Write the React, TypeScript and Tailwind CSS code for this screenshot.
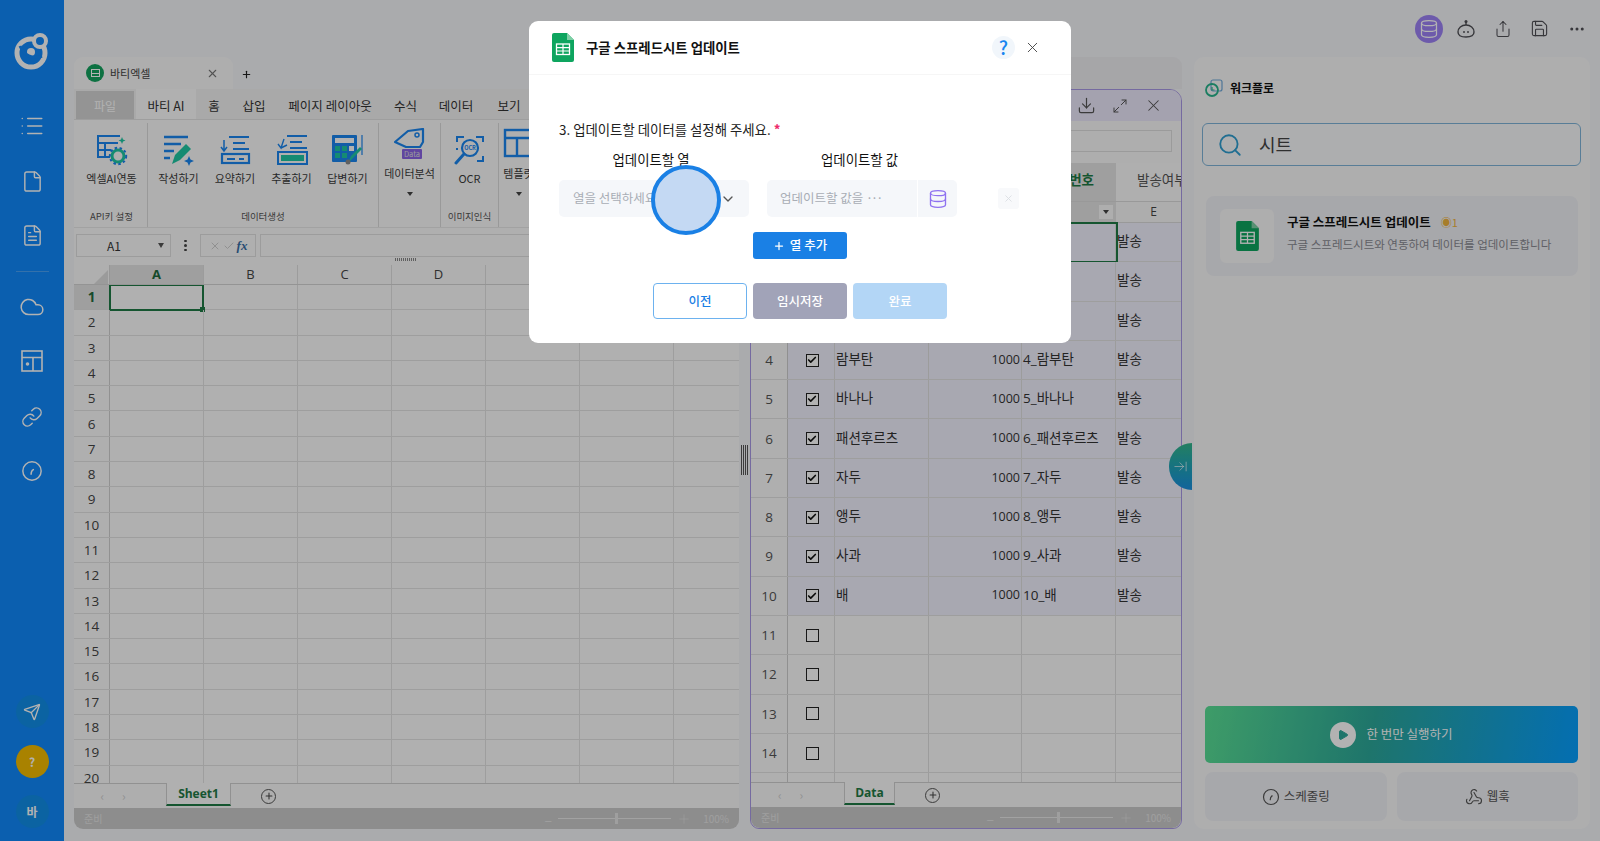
import { ArrowRightToLine, Check, ChevronDown, Cloud, Database, Download, Ellipsis, File, FileText, Link, List, Maximize2, Play, Plus, Save, Search, Send, Share, Webhook, X } from 'lucide-react';

const blue = '#1a86f0';
const teal = '#1fc8a4';

function SheetIcon({ className }: { className: string }) {
    return (
        <svg viewBox="0 0 22 29" className={className}>
            <path d="M2 0h13l7 7v20a2 2 0 0 1-2 2H2a2 2 0 0 1-2-2V2a2 2 0 0 1 2-2z" fill="#0ea55f" />
            <path d="M15 0l7 7h-7z" fill="#7fd0a6" />
            <rect x="4.5" y="11" width="13" height="10.5" fill="none" stroke="#fff" strokeWidth="1.3" />
            <path d="M4.5 14.6h13M4.5 18h13M11 11v10.5" stroke="#fff" strokeWidth="1.2" />
        </svg>
    );
}

function GaugeIcon({ size, color }: { size: number; color: string }) {
    return (
        <svg width={size} height={size} viewBox="0 0 24 24" fill="none" stroke={color} strokeWidth="1.6" strokeLinecap="round">
            <circle cx="12" cy="12" r="10" />
            <path d="M11 15.5c0-2 .5-4 2.5-5" />
        </svg>
    );
}

function LayoutIcon() {
    return (
        <svg width="22" height="22" viewBox="0 0 22 22" fill="none" stroke="white" strokeWidth="1.6">
            <rect x="1" y="1" width="20" height="20" />
            <path d="M1 7.5h20M12 7.5V21" />
            <circle cx="6.5" cy="14" r="1" fill="white" />
        </svg>
    );
}

function RibbonIcon({ name }: { name: string }) {
    if (name === 'excel') {
        return (
            <svg width="32" height="32" viewBox="0 0 32 32" fill="none">
                <path d="M24 2H2v21h12" stroke={blue} strokeWidth="2" />
                <path d="M2 9h20M2 16h13M9 9v14" stroke={blue} strokeWidth="2" />
                <path d="M26 3l1 2.5 2.5 1-2.5 1-1 2.5-1-2.5-2.500-1 2.500-1z" fill={teal} />
                <circle cx="22" cy="22" r="6" stroke={teal} strokeWidth="3" />
                <circle cx="22" cy="22" r="8.200" stroke={blue} strokeWidth="2" strokeDasharray="2.500 2.500" />
            </svg>
        );
    }
    if (name === 'write') {
        return (
            <svg width="32" height="32" viewBox="0 0 32 32" fill="none">
                <path d="M1 3h24M1 10h17M1 17h10M1 24h6" stroke={blue} strokeWidth="2.400" />
                <path d="M9 30l3-9 11-11 5 5-11 11z" fill={teal} />
                <path d="M26 22l1.500 3.500 3.500 1.500-3.500 1.500-1.500 3.500-1.500-3.500-3.500-1.500 3.500-1.500z" fill={blue} />
            </svg>
        );
    }
    if (name === 'summary') {
        return (
            <svg width="32" height="32" viewBox="0 0 32 32" fill="none">
                <path d="M10 3h20M14 9h12M14 15h16" stroke={blue} strokeWidth="2.200" />
                <path d="M5 6v11M2 13l3 4 3-4" stroke={blue} strokeWidth="1.500" />
                <rect x="3" y="20" width="27" height="9" stroke={blue} strokeWidth="2.200" />
                <path d="M8 25h8M20 25h5" stroke={blue} strokeWidth="2" />
            </svg>
        );
    }
    if (name === 'extract') {
        return (
            <svg width="32" height="32" viewBox="0 0 32 32" fill="none">
                <path d="M11 2h20M14 8h12M14 14h17" stroke={blue} strokeWidth="2.200" />
                <path d="M8 5L5 14 2 10M5 14l6-3" stroke={blue} strokeWidth="1.400" />
                <rect x="2" y="18" width="29" height="12" stroke={blue} strokeWidth="2" />
                <rect x="5" y="21" width="23" height="6" fill={teal} />
            </svg>
        );
    }
    if (name === 'answer') {
        return (
            <svg width="34" height="32" viewBox="0 0 34 32" fill="none">
                <rect x="1" y="1" width="25" height="27" rx="1" fill={blue} />
                <rect x="4" y="4" width="19" height="5" fill="#fff" />
                <path d="M4 12h5v5H4zM11 12h5v5h-5zM4 19h5v5H4zM11 19h5v5h-5z" fill={teal} />
                <path d="M18 12h5v5h-5z" fill="#fff" />
                <path d="M31 1v20" stroke={blue} strokeWidth="1.200" />
                <path d="M17 29l3-7 9-9 2 2-9 9z" fill={teal} />
                <circle cx="17" cy="28" r="2.500" fill="#8a8a8a" />
            </svg>
        );
    }
    if (name === 'tag') {
        return (
            <svg width="32" height="32" viewBox="0 0 32 32" fill="none">
                <path d="M1 14L14 3l15-2v13L26 19H12z" stroke={blue} strokeWidth="2.200" strokeLinejoin="round" />
                <circle cx="23" cy="7" r="2" stroke={blue} strokeWidth="1.500" />
                <rect x="8" y="21" width="20" height="10" rx="1" fill="#8a64e6" />
                <text x="18" y="29" textAnchor="middle" fontSize="7.500" fill="#ddd">Data</text>
            </svg>
        );
    }
    if (name === 'ocr') {
        return (
            <svg width="32" height="32" viewBox="0 0 32 32" fill="none">
                <path d="M3 8V3h7M29 8V3h-7M29 22v5h-6M3 16v-2" stroke={blue} strokeWidth="2" />
                <circle cx="16" cy="14" r="8" stroke={blue} strokeWidth="2.200" />
                <path d="M10 20l-8 9" stroke={blue} strokeWidth="3" strokeLinecap="round" />
                <text x="16" y="16" textAnchor="middle" fontSize="5.500" fontWeight="700" fill={blue}>OCR</text>
            </svg>
        );
    }
    return (
        <svg width="32" height="32" viewBox="0 0 32 32" fill="none">
            <rect x="2" y="2" width="28" height="26" stroke={blue} strokeWidth="2.400" />
            <path d="M2 10h28M14 10v18" stroke={blue} strokeWidth="2.400" />
        </svg>
    );
}

function RibbonItem({ name, label, width, caret }: { name: string; label: string; width: string; caret?: boolean }) {
    return (
        <div className={`${width} shrink-0 flex flex-col items-center`}>
            <div className={caret ? 'h-[42px] flex items-center' : 'h-[43px] flex items-end'}>
                <RibbonIcon name={name} />
            </div>
            <div className={`${caret ? 'mt-0' : 'mt-[4px]'} text-[11px] text-[#3a3a3a] whitespace-nowrap`}>{label}</div>
            {caret && <div className="mt-[10px] w-0 h-0 border-x-[3px] border-x-transparent border-t-[4px] border-t-[#444]" />}
        </div>
    );
}

function RibbonGroup({ label, width, children }: { label: string; width: string; children: React.ReactNode }) {
    return (
        <div className={`${width} shrink-0 h-full flex flex-col border-r border-[#dcdcdc]`}>
            <div className="flex-1 flex justify-center">{children}</div>
            <div className="h-[18px] text-[9.5px] text-[#555] text-center">{label}</div>
        </div>
    );
}

function Ribbon() {
    const tabs: [string, string][] = [
        ['홈', 'w-[36px]'],
        ['삽입', 'w-[44px]'],
        ['페이지 레이아웃', 'w-[108px]'],
        ['수식', 'w-[43px]'],
        ['데이터', 'w-[58px]'],
        ['보기', 'w-[48px]'],
    ];
    return (
        <>
            <div className="h-[31px] shrink-0 bg-[#f3f3f3] flex items-end pl-[2px] border-b border-[#e3e3e3] font-['Noto_Sans_CJK_KR',sans-serif]">
                <div className="w-[58px] h-[28px] bg-[#d4d4d4] text-white text-[12px] flex items-center justify-center pt-[2px]">파일</div>
                <div className="ml-[2px] w-[60px] h-[30px] bg-[#fcfcfc] text-[12.500px] text-[#333] flex items-center justify-center pt-[4px]">바티 AI</div>
                {tabs.map(([t, w]) => (
                    <div key={t} className={`${w} h-[28px] shrink-0 text-[12.500px] text-[#333] flex items-center justify-center pt-[3px]`}>{t}</div>
                ))}
            </div>
            <div className="h-[108px] shrink-0 bg-[#fbfbfb] flex overflow-hidden pt-[3px] pl-[2px] border-b border-[#e8e8e8]">
                <RibbonGroup label="API키 설정" width="w-[72px]">
                    <RibbonItem name="excel" label="엑셀AI연동" width="w-[70px]" />
                </RibbonGroup>
                <RibbonGroup label="데이터생성" width="w-[231px]">
                    <RibbonItem name="write" label="작성하기" width="w-[56px]" />
                    <RibbonItem name="summary" label="요약하기" width="w-[57px]" />
                    <RibbonItem name="extract" label="추출하기" width="w-[56px]" />
                    <RibbonItem name="answer" label="답변하기" width="w-[56px]" />
                </RibbonGroup>
                <RibbonGroup label="" width="w-[62px]">
                    <RibbonItem name="tag" label="데이터분석" caret width="w-[60px]" />
                </RibbonGroup>
                <RibbonGroup label="이미지인식" width="w-[58px]">
                    <RibbonItem name="ocr" label="OCR" width="w-[56px]" />
                </RibbonGroup>
                <RibbonGroup label="" width="w-[40px]">
                    <RibbonItem name="template" label="템플릿" caret width="w-[38px]" />
                </RibbonGroup>
            </div>
        </>
    );
}

function FormulaBar() {
    return (
        <div className="h-[37px] shrink-0 bg-[#fbfbfb] flex items-start pt-[6px] pl-[2px] pr-[10px] gap-[4px]">
            <div className="w-[95px] h-[23px] border border-[#e0e0e0] flex items-center justify-between pl-[30px] pr-[6px] text-[12px] text-[#333]">
                A1
                <div className="w-0 h-0 border-x-[3.500px] border-x-transparent border-t-[5px] border-t-[#555]" />
            </div>
            <div className="w-[21px] h-[23px] flex flex-col items-center justify-center gap-[2px]">
                <div className="w-[2.500px] h-[2.500px] rounded-full bg-[#444]" />
                <div className="w-[2.500px] h-[2.500px] rounded-full bg-[#444]" />
                <div className="w-[2.500px] h-[2.500px] rounded-full bg-[#444]" />
            </div>
            <div className="w-[56px] h-[23px] border border-[#e0e0e0] flex items-center justify-center gap-[2px] text-[#cfcfcf]">
                <X size={12} />
                <Check size={12} />
                <span className="font-['Liberation_Serif',serif] italic text-[13px] text-[#3a6ea5] font-bold">fx</span>
            </div>
            <div className="flex-1 h-[23px] border border-[#e0e0e0] relative">
                <div className="absolute left-[134px] top-[23px] w-[22px] h-[3px] bg-[repeating-linear-gradient(90deg,#888_0,#888_1px,transparent_1px,transparent_2px)]" />
            </div>
        </div>
    );
}

function SheetBar({ name, tabW, plusGap, left }: { name: string; tabW: string; plusGap: string; left: string }) {
    return (
        <div className="h-[25px] shrink-0 bg-[#fafafa] border-t border-[#d0d0d0] flex items-start">
            <div className={`${left} h-full flex items-center justify-center gap-[18px] pr-[14px] text-[#cfcfcf] text-[12px]`}>
                <span>‹</span>
                <span>›</span>
            </div>
            <div className={`${tabW} h-[23px] -mt-px bg-[#fcfcfc] border-x border-[#d0d0d0] border-b-2 border-b-[#1f7a45] flex items-center justify-center text-[12px] font-bold text-[#1f7a45] font-['Open_Sans',sans-serif]`}>{name}</div>
            <div className={`${plusGap} h-full flex items-center`}>
                <div className="w-[15px] h-[15px] rounded-full border border-[#555] flex items-center justify-center">
                    <Plus size={10} color="#444" strokeWidth={2.500} />
                </div>
            </div>
        </div>
    );
}

function StatusBar({ sliderW }: { sliderW: string }) {
    return (
        <div className="h-[21px] shrink-0 bg-[#cbcbcb] rounded-b-[9px] flex items-center px-[10px] text-[10px] text-[#e4e4e4]">
            <span>준비</span>
            <div className="ml-auto flex items-center gap-[4px]">
                <span className="text-[14px] leading-none">–</span>
                <div className={`${sliderW} h-px bg-[#e8e8e8] relative mx-[2px]`}>
                    <div className="absolute left-1/2 -top-[5px] w-[3px] h-[11px] bg-[#e4e4e4]" />
                </div>
                <Plus size={14} strokeWidth={1} />
                <span className="ml-[8px]">100%</span>
            </div>
        </div>
    );
}

function LeftSheet() {
    const columns = ['A', 'B', 'C', 'D', '', '', ''];
    const rows = Array.from({ length: 20 }, (_, i) => i + 1);
    return (
        <div className="w-[665px] shrink-0 flex flex-col">
            <div className="h-[32px] shrink-0 flex items-center">
                <div className="w-[159px] h-full bg-[#fafafa] rounded-t-[9px] flex items-center pl-[12px] pr-[14px]">
                    <div className="w-[18px] h-[18px] rounded-full bg-[#14a35f] flex items-center justify-center">
                        <div className="w-[9px] h-[8px] border border-white bg-[linear-gradient(#fff,#fff)] bg-[length:100%_1px] bg-center bg-no-repeat" />
                    </div>
                    <span className="ml-[6px] text-[11px] text-[#444]">바티엑셀</span>
                    <X size={13} color="#777" className="ml-auto" />
                </div>
                <Plus size={11} color="#222" strokeWidth={2.500} className="ml-[8px] mt-[2px]" />
            </div>
            <Ribbon />
            <FormulaBar />
            <div className="flex-1 flex flex-col overflow-hidden bg-[#fdfdfd] font-['Open_Sans','Noto_Sans_CJK_KR',sans-serif]">
                <div className="h-[20px] shrink-0 flex border-b border-[#d4d4d4] bg-[#fbfbfb]">
                    <div className="w-[36px] shrink-0 border-r border-[#d8d8d8] flex justify-end items-end pr-[1px]">
                        <div className="w-0 h-0 border-l-[14px] border-l-transparent border-b-[14px] border-b-[#dedede]" />
                    </div>
                    {columns.map((c, i) => (
                        <div key={i} className={`w-[94px] shrink-0 border-r border-[#e0e0e0] flex items-center justify-center text-[13px] ${i === 0 ? 'bg-[#e4e4e4] font-bold text-[#1f6b3d]' : 'text-[#444]'}`}>{c}</div>
                    ))}
                </div>
                <div className="flex-1 overflow-hidden">
                    {rows.map(r => (
                        <div key={r} className="h-[25.300px] flex border-b border-[#e3e3e3] relative">
                            <div className={`w-[36px] shrink-0 border-r border-[#d0d0d0] flex items-center justify-center text-[13.500px] ${r === 1 ? 'bg-[#e4e4e4] font-bold text-[#1f6b3d]' : 'bg-[#fbfbfb] text-[#444]'}`}>{r}</div>
                            {columns.map((_, i) => (
                                <div key={i} className="w-[94px] shrink-0 border-r border-[#e3e3e3]" />
                            ))}
                            {r === 1 && (
                                <div className="absolute left-[35px] top-[-1px] w-[95px] h-[27px] border-2 border-[#1f7a45]">
                                    <div className="absolute -right-[3px] -bottom-[3px] w-[5px] h-[5px] bg-[#1f7a45]" />
                                </div>
                            )}
                        </div>
                    ))}
                </div>
            </div>
            <SheetBar name="Sheet1" tabW="w-[65px]" plusGap="ml-[30px]" left="w-[92px]" />
            <StatusBar sliderW="w-[113px]" />
        </div>
    );
}

const dataRows = [
    { no: 1, name: '', checked: true },
    { no: 2, name: '', checked: true },
    { no: 3, name: '', checked: true },
    { no: 4, name: '람부탄', checked: true },
    { no: 5, name: '바나나', checked: true },
    { no: 6, name: '패션후르츠', checked: true },
    { no: 7, name: '자두', checked: true },
    { no: 8, name: '앵두', checked: true },
    { no: 9, name: '사과', checked: true },
    { no: 10, name: '배', checked: true },
    { no: 11, name: '', checked: false },
    { no: 12, name: '', checked: false },
    { no: 13, name: '', checked: false },
    { no: 14, name: '', checked: false },
    { no: 15, name: '', checked: false },
];

function RightSheet() {
    return (
        <div className="w-[432px] shrink-0 flex flex-col relative">
            <div className="h-[32px] shrink-0 bg-[#eeeef1] rounded-t-[9px]" />
            <div className="flex-1 flex flex-col min-h-0 border border-[#a898e6] rounded-t-[12px] rounded-b-[9px]">
                <div className="h-[31px] shrink-0 bg-[#ebe8fb] rounded-t-[11px] flex items-center justify-end gap-[16px] pr-[18px] text-[#555]">
                    <Download size={19} strokeWidth={1.500} />
                    <Maximize2 size={16} strokeWidth={1.500} />
                    <X size={19} strokeWidth={1.300} />
                </div>
                <div className="h-[42px] shrink-0 bg-[#fafafa] flex items-start pt-[9px] justify-end pr-[9px]">
                    <div className="w-[300px] h-[22px] border border-[#dedede]" />
                </div>
                <div className="flex-1 min-h-0 flex flex-col overflow-hidden font-['Open_Sans','Noto_Sans_CJK_KR',sans-serif] text-[13.500px] text-[#333]">
                    <div className="h-[38px] shrink-0 flex bg-[#fbfbfb]">
                        <div className="w-[365px] shrink-0 bg-[#e4e4e4] flex items-center justify-end pr-[22px] pb-[4px] font-bold text-[#1f7a45]">번호</div>
                        <div className="flex-1 flex items-center pl-[21px] pb-[4px] text-[#555] whitespace-nowrap overflow-hidden">발송여부</div>
                    </div>
                    <div className="h-[22px] shrink-0 flex bg-[#f8f8f8] border-y border-[#dcdcdc]">
                        <div className="w-[365px] shrink-0 bg-[#e4e4e4] flex items-center justify-end pr-[3px]">
                            <div className="w-[14px] h-[14px] bg-[#fafafa] flex items-center justify-center">
                                <div className="w-0 h-0 border-x-[3.500px] border-x-transparent border-t-[4px] border-t-[#444]" />
                            </div>
                        </div>
                        <div className="flex-1 flex items-center justify-center pl-[10px] text-[12px] text-[#444]">E</div>
                    </div>
                    {dataRows.map(r => (
                        <div key={r.no} className="h-[39.300px] shrink-0 flex border-b border-[#e3e3e3] relative">
                            <div className="w-[37px] shrink-0 bg-[#fbfbfb] border-r border-[#cfcfcf] flex items-center justify-center text-[#555]">{r.no}</div>
                            <div className={`flex-1 flex ${r.no <= 10 ? 'bg-[#f1f1fe]' : 'bg-[#fdfdfd]'}`}>
                                <div className="w-[47px] shrink-0 border-r border-[#e0e0e0] pl-[2px] flex items-center justify-center">
                                    <div className="w-[13px] h-[13px] border border-[#222] flex items-center justify-center bg-white">
                                        {r.checked && <Check size={10} color="#111" strokeWidth={4} />}
                                    </div>
                                </div>
                                <div className="w-[94px] shrink-0 border-r border-[#e0e0e0] pl-[1px] pb-[2px] flex items-center">{r.name}</div>
                                <div className="w-[93px] shrink-0 border-r border-[#e0e0e0] pr-[1px] flex items-center justify-end text-[12.500px]">{r.name && '1000'}</div>
                                <div className="w-[94px] shrink-0 border-r border-[#e0e0e0] pl-[1px] pb-[2px] flex items-center whitespace-nowrap">{r.name && `${r.no}_${r.name}`}</div>
                                <div className="flex-1 pl-[1px] pb-[2px] flex items-center">{r.no <= 10 && '발송'}</div>
                            </div>
                            {r.no === 1 && <div className="absolute left-[181px] top-[-1px] w-[186px] h-[41px] border-2 border-[#1f7a45]" />}
                        </div>
                    ))}
                </div>
                <SheetBar name="Data" tabW="w-[51px]" plusGap="ml-[30px]" left="w-[93px]" />
                <StatusBar sliderW="w-[113px]" />
            </div>
            <div className="absolute right-[-10px] top-[386px] w-[23px] h-[47px] rounded-l-full bg-gradient-to-b from-[#34b68a] to-[#1d8fe0] flex items-center justify-center text-white">
                <ArrowRightToLine size={15} strokeWidth={1} />
            </div>
        </div>
    );
}

function WorkflowPanel() {
    return (
        <div className="flex-1 bg-[#fafafa] rounded-[10px] flex flex-col px-[9px] pt-[22px] pb-[8px] font-['Noto_Sans_CJK_KR',sans-serif]">
            <div className="flex items-center h-[18px] pl-[2px]">
                <svg width="18" height="18" viewBox="0 0 18 18" fill="none">
                    <rect x="6" y="1" width="11" height="11" rx="2" stroke="#6fa8d8" strokeWidth="1.200" />
                    <circle cx="7" cy="11" r="6" stroke="#28b48c" strokeWidth="1.800" />
                    <path d="M7 8v3h2.500" stroke="#28b48c" strokeWidth="1.200" />
                </svg>
                <span className="ml-[7px] text-[12px] font-bold text-[#111]">워크플로</span>
            </div>
            <div className="mt-[26px] -ml-px h-[43px] shrink-0 border border-[#7fb4d8] rounded-[6px] bg-[#f8f9fb] flex items-center pl-[14px]">
                <Search size={26} color="#2f9ed0" strokeWidth={1.700} />
                <span className="ml-[16px] text-[18px] text-[#444]">시트</span>
            </div>
            <div className="mt-[30px] mx-[3px] h-[80px] shrink-0 rounded-[8px] bg-[#f0f1f5] flex items-center pl-[14px]">
                <div className="w-[54px] h-[54px] bg-[#f9f9f9] rounded-[6px] flex items-center justify-center">
                    <SheetIcon className="w-[23px] h-[30px]" />
                </div>
                <div className="ml-[13px] pb-[6px]">
                    <div className="flex items-center">
                        <span className="text-[12.500px] font-bold text-[#111] leading-[18px]">구글 스프레드시트 업데이트</span>
                        <span className="ml-[10px] text-[11px] text-[#f0b43c]">◉1</span>
                    </div>
                    <div className="mt-[5px] text-[11.500px] text-[#8a8a92] whitespace-nowrap">구글 스프레드시트와 연동하여 데이터를 업데이트합니다</div>
                </div>
            </div>
            <div className="mt-auto ml-[2px] mr-[3px] flex flex-col gap-[9px]">
                <div className="h-[57px] rounded-[5px] bg-[linear-gradient(100deg,#5ae096,#2ca89a_45%,#069fff)] flex items-center justify-center gap-[10px] text-[12.500px] text-white">
                    <div className="w-[26px] h-[26px] rounded-full bg-white flex items-center justify-center">
                        <Play size={12} fill="#2ca89a" color="#2ca89a" />
                    </div>
                    한 번만 실행하기
                </div>
                <div className="flex gap-[10px] h-[49px]">
                    <div className="flex-1 bg-[#f0f1f5] rounded-[8px] flex items-center justify-center gap-[4px] text-[12.500px] text-[#555]">
                        <GaugeIcon size={18} color="#555" />
                        스케줄링
                    </div>
                    <div className="flex-1 bg-[#f0f1f5] rounded-[8px] flex items-center justify-center gap-[4px] text-[12.500px] text-[#555]">
                        <Webhook size={18} color="#555" strokeWidth={1.500} />
                        웹훅
                    </div>
                </div>
            </div>
        </div>
    );
}

function Sidebar() {
    return (
        <div className="w-[64px] shrink-0 bg-[#1088fb] flex flex-col items-center text-white">
            <div className="h-[98px] flex items-start pt-[32px]">
                <svg width="36" height="38" viewBox="0 0 36 38" fill="none">
                    <circle cx="17" cy="21" r="14" stroke="white" strokeWidth="5" />
                    <circle cx="17" cy="20" r="4" fill="white" />
                    <path d="M6 14c4 9 12 14 22 10" stroke="#1088fb" strokeWidth="3" />
                    <circle cx="26" cy="9" r="6" fill="#1088fb" stroke="white" strokeWidth="4" />
                </svg>
            </div>
            <div className="h-[55px] flex items-center"><List size={26} strokeWidth={1.400} /></div>
            <div className="h-[57px] flex items-center"><File size={23} strokeWidth={1.500} /></div>
            <div className="h-[51px] flex items-center"><FileText size={23} strokeWidth={1.500} /></div>
            <div className="my-[10px] w-[33px] h-px bg-[#4ba3f5]" />
            <div className="h-[50px] flex items-center"><Cloud size={26} strokeWidth={1.400} /></div>
            <div className="h-[58px] flex items-center"><LayoutIcon /></div>
            <div className="h-[54px] flex items-center"><Link size={22} strokeWidth={1.600} /></div>
            <div className="h-[54px] flex items-center"><GaugeIcon size={22} color="white" /></div>
            <div className="mt-auto flex flex-col items-center gap-[17px] pb-[13px]">
                <div className="w-[33px] h-[33px] rounded-full bg-[#108fe8] flex items-center justify-center"><Send size={18} strokeWidth={1.800} /></div>
                <div className="w-[33px] h-[33px] rounded-full bg-[#f2bb00] flex items-center justify-center text-[12px] font-bold">?</div>
                <div className="w-[33px] h-[33px] rounded-full bg-[#108fe8] flex items-center justify-center text-[12px] font-bold">바</div>
            </div>
        </div>
    );
}

function TopBar() {
    return (
        <div className="h-[57px] shrink-0 flex items-center justify-end text-[#4f4f55]">
            <div className="w-[37px] flex justify-center">
                <div className="w-[28px] h-[28px] rounded-full bg-[#9c82f5] flex items-center justify-center text-white">
                    <Database size={20} strokeWidth={1.500} />
                </div>
            </div>
            <div className="w-[37px] flex justify-center">
                <svg width="18" height="20" viewBox="0 0 18 20" fill="none" stroke="currentColor" strokeWidth="1.400">
                    <circle cx="9" cy="2.500" r="1.500" fill="currentColor" stroke="none" />
                    <path d="M9 3v3" />
                    <path d="M1 13c0-4 3.500-7 8-7s8 3 8 7-3.500 5-8 5-8-1-8-5z" />
                    <path d="M7 12v2M11 12v2" />
                </svg>
            </div>
            <div className="w-[37px] flex justify-center"><Share size={18} strokeWidth={1.400} /></div>
            <div className="w-[37px] flex justify-center"><Save size={19} strokeWidth={1.400} /></div>
            <div className="w-[37px] flex justify-center mr-[5px]"><Ellipsis size={18} /></div>
        </div>
    );
}

function UpdateModal() {
    return (
        <div className="absolute z-20 left-[529px] top-[21px] w-[542px] h-[322px] bg-white rounded-[9px] flex flex-col font-['Noto_Sans_CJK_KR','Noto_Sans',sans-serif]">
            <div className="h-[54px] shrink-0 border-b border-[#f6f6f6] flex items-center pl-[23px] pr-[30px]">
                <SheetIcon className="w-[22px] h-[29px]" />
                <span className="ml-[12px] text-[13.400px] font-bold text-[#111]">구글 스프레드시트 업데이트</span>
                <div className="ml-auto w-[23px] h-[23px] rounded-full bg-[#f1f6fb] flex items-center justify-center text-[19px] font-medium text-[#1a86f0]">?</div>
                <X size={17} color="#444" strokeWidth={1.300} className="ml-[9px]" />
            </div>
            <div className="pl-[30px] pt-[44px] text-[13.400px] text-[#222]">
                3. 업데이트할 데이터를 설정해 주세요. <span className="text-[#ee2a6a] font-bold">*</span>
            </div>
            <div className="mt-[10px] flex pl-[27px] text-[13.400px] font-normal text-[#111]">
                <div className="w-[190px] text-center">업데이트할 열</div>
                <div className="ml-[19px] w-[189px] text-center">업데이트할 값</div>
            </div>
            <div className="mt-[11px] flex items-center pl-[30px]">
                <div className="w-[190px] h-[37px] rounded-[5px] bg-[#f5f7fa] flex items-center justify-between pl-[14px] pr-[13px] text-[12.500px] text-[#a8adb5]">
                    열을 선택하세요
                    <ChevronDown size={16} color="#555" />
                </div>
                <div className="ml-[18px] w-[190px] h-[37px] rounded-[5px] bg-[#f5f7fa] flex items-center pl-[13px] text-[12.500px] text-[#a8adb5]">
                    <span>업데이트할 값을 <span className="tracking-[-2px]">···</span></span>
                    <div className="ml-auto w-[40px] h-full border-l border-white flex items-center justify-center">
                        <Database size={20} color="#8f72f0" strokeWidth={1.600} />
                    </div>
                </div>
                <div className="ml-[41px] w-[21px] h-[21px] rounded-[3px] bg-[#f8f9fb] flex items-center justify-center">
                    <X size={11} color="#dcdfe4" strokeWidth={2} />
                </div>
            </div>
            <div className="mt-[15px] flex justify-center">
                <div className="w-[94px] h-[27px] rounded-[3px] bg-[#1a80e5] flex items-center justify-center gap-[5px] text-[12.500px] font-medium text-white">
                    <Plus size={12} strokeWidth={2.500} />
                    열 추가
                </div>
            </div>
            <div className="mt-[24px] flex justify-center gap-[6px] text-[12.500px] font-medium">
                <div className="w-[94px] h-[36px] rounded-[4px] border border-[#6db2ef] text-[#1a80e5] flex items-center justify-center">이전</div>
                <div className="w-[94px] h-[36px] rounded-[4px] bg-[#a1a3b8] text-white flex items-center justify-center">임시저장</div>
                <div className="w-[94px] h-[36px] rounded-[4px] bg-[#b3d6f6] text-white flex items-center justify-center">완료</div>
            </div>
        </div>
    );
}

export default function App() {
    return (
        <div className="relative w-[1600px] h-[841px] overflow-hidden flex bg-[#f4f5f8] font-['Noto_Sans_CJK_KR','Noto_Sans',sans-serif]">
            <Sidebar />
            <div className="flex-1 flex flex-col min-w-0">
                <TopBar />
                <div className="h-[772px] flex pl-[10px] pr-[10px]">
                    <LeftSheet />
                    <div className="w-[11px] shrink-0 flex items-center justify-center">
                        <div className="w-[7px] h-[30px] mt-[34px] bg-[repeating-linear-gradient(90deg,#555_0,#555_1px,transparent_1px,transparent_2px)]" />
                    </div>
                    <RightSheet />
                    <div className="w-[12px] shrink-0" />
                    <WorkflowPanel />
                </div>
            </div>
            <div className="absolute inset-0 z-10 bg-black/30" />
            <UpdateModal />
            <div className="absolute z-30 left-[651px] top-[165px] w-[70px] h-[70px] rounded-full border-[4px] border-[#1a80e5] bg-[#c4d9f3]" />
        </div>
    );
}
